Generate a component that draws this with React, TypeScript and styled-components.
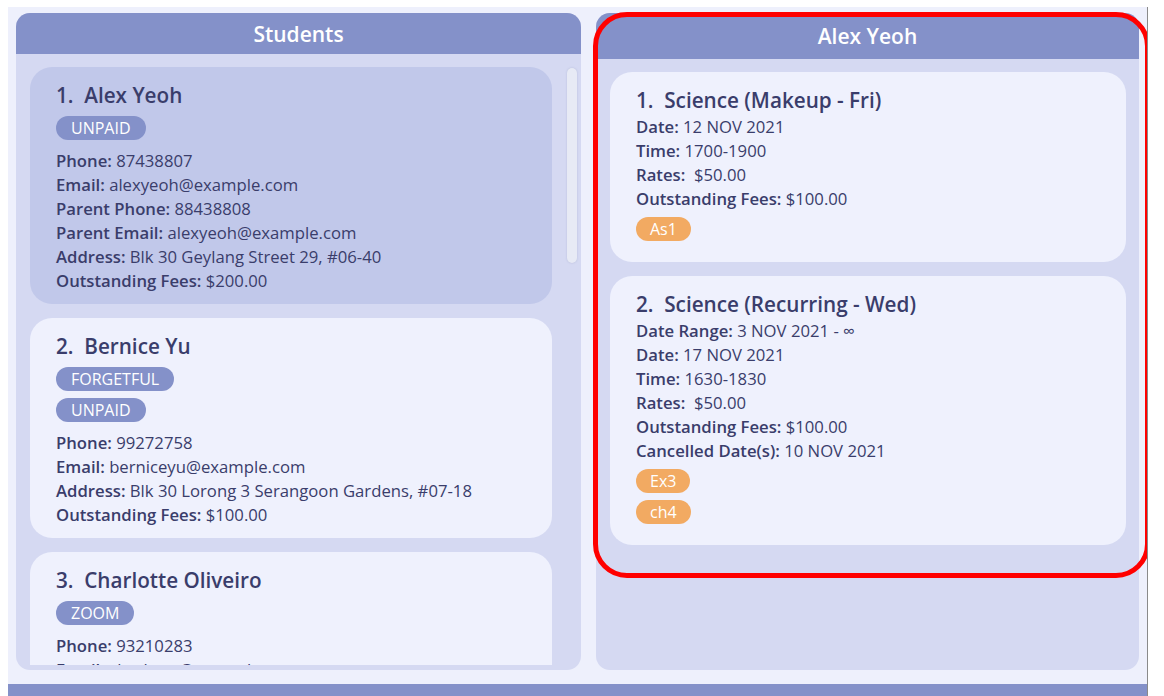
import React from "react";
import styled, { createGlobalStyle } from "styled-components";

const Global = createGlobalStyle`
  html, body { margin: 0; padding: 0; background: #ffffff; }
  body { font-family: "Open Sans", "Noto Sans", sans-serif; overflow: hidden; }
  * { box-sizing: border-box; }
`;

const Window = styled.div`
  position: relative;
  margin: 7px 0 0 8px;
  width: 1140px;
  height: 689px;
  background: #eef0fc;
  border-right: 1px solid #8a8a8a;
  display: flex;
  flex-direction: column;
  overflow: hidden;
`;

const Panels = styled.div`
  display: flex;
  gap: 15px;
  padding: 6px 8px 0 8px;
  height: 663px;
`;

const Panel = styled.section<{ $w: number }>`
  width: ${(p) => p.$w}px;
  height: 657px;
  background: #d5d9f2;
  border-radius: 14px;
  display: flex;
  flex-direction: column;
  overflow: hidden;
`;

const PanelHeader = styled.header<{ $h: number }>`
  height: ${(p) => p.$h}px;
  flex: none;
  background: #8491c9;
  color: #ffffff;
  font-size: 21px;
  font-weight: 600;
  display: flex;
  align-items: center;
  justify-content: center;
`;

const ListViewport = styled.div`
  flex: 1;
  margin-bottom: 5px;
  overflow: hidden;
  display: flex;
  gap: 15px;
  padding: 13px 4px 0 14px;
`;

const CardColumn = styled.div`
  flex: 1;
  display: flex;
  flex-direction: column;
  gap: 14px;
`;

const ScrollTrack = styled.div`
  width: 10px;
  flex: none;
  padding-top: 1px;
`;

const ScrollThumb = styled.div`
  width: 10px;
  height: 195px;
  border-radius: 5px;
  background: #e7eaf5;
  box-shadow: 0 0 2px rgba(120, 130, 170, 0.35);
`;

const DetailBody = styled.div`
  flex: 1;
  display: flex;
  flex-direction: column;
  gap: 14px;
  padding: 13px 13px 0 14px;
`;

const Card = styled.div<{ $selected?: boolean; $pb: number }>`
  background: ${(p) => (p.$selected ? "#c1c8ea" : "#eff1fd")};
  border-radius: 22px;
  padding: 14px 20px ${(p) => p.$pb}px 26px;
  color: #3a3d6b;
  flex: none;
`;

const Title = styled.div`
  height: 28px;
  font-size: 20.7px;
  font-weight: 600;
  line-height: 28px;
  white-space: pre;
  color: #3a3d6b;
`;

const Tags = styled.div<{ $mt: number }>`
  display: flex;
  flex-direction: column;
  align-items: flex-start;
  gap: 7px;
  margin-top: ${(p) => p.$mt}px;
`;

const Tag = styled.span<{ $tone: "purple" | "orange" }>`
  display: inline-flex;
  align-items: center;
  height: 24px;
  padding: 0 ${(p) => (p.$tone === "purple" ? 15 : 14)}px;
  border-radius: 12px;
  background: ${(p) => (p.$tone === "purple" ? "#8491c9" : "#f2aa62")};
  color: #ffffff;
  font-size: 16px;
  line-height: 24px;
`;

const Line = styled.div`
  height: 24px;
  font-size: 16.7px;
  line-height: 24px;
  white-space: pre;
  color: #3a3d6b;
`;

const Label = styled.span`
  font-weight: 600;
`;

const Lines = styled.div<{ $mt: number }>`
  margin-top: ${(p) => p.$mt}px;
`;

const StatusBar = styled.div`
  margin-top: 14px;
  height: 14px;
  background: #8491c9;
  flex: none;
`;

const Highlight = styled.div`
  position: absolute;
  left: 585px;
  top: 5px;
  width: 557px;
  height: 566px;
  border: 5px solid #ff0000;
  border-radius: 34px;
  pointer-events: none;
`;

type Field = [string, string];

type Student = {
  name: string;
  tags: string[];
  fields: Field[];
  selected?: boolean;
};

const students: Student[] = [
  {
    name: "Alex Yeoh",
    tags: ["UNPAID"],
    selected: true,
    fields: [
      ["Phone:", " 87438807"],
      ["Email:", " alexyeoh@example.com"],
      ["Parent Phone:", " 88438808"],
      ["Parent Email:", " alexyeoh@example.com"],
      ["Address:", " Blk 30 Geylang Street 29, #06-40"],
      ["Outstanding Fees:", " $200.00"],
    ],
  },
  {
    name: "Bernice Yu",
    tags: ["FORGETFUL", "UNPAID"],
    fields: [
      ["Phone:", " 99272758"],
      ["Email:", " berniceyu@example.com"],
      ["Address:", " Blk 30 Lorong 3 Serangoon Gardens, #07-18"],
      ["Outstanding Fees:", " $100.00"],
    ],
  },
  {
    name: "Charlotte Oliveiro",
    tags: ["ZOOM"],
    fields: [
      ["Phone:", " 93210283"],
      ["Email:", " charlotte@example.com"],
    ],
  },
];

type Lesson = { title: string; fields: Field[]; tags: string[] };

const lessons: Lesson[] = [
  {
    title: "Science (Makeup - Fri)",
    fields: [
      ["Date:", " 12 NOV 2021"],
      ["Time:", " 1700-1900"],
      ["Rates:", "  $50.00"],
      ["Outstanding Fees:", " $100.00"],
    ],
    tags: ["As1"],
  },
  {
    title: "Science (Recurring - Wed)",
    fields: [
      ["Date Range:", " 3 NOV 2021 - \u221e"],
      ["Date:", " 17 NOV 2021"],
      ["Time:", " 1630-1830"],
      ["Rates:", "  $50.00"],
      ["Outstanding Fees:", " $100.00"],
      ["Cancelled Date(s):", " 10 NOV 2021"],
    ],
    tags: ["Ex3", "ch4"],
  },
];

const FieldLines = ({ fields, mt }: { fields: Field[]; mt: number }) => (
  <Lines $mt={mt}>
    {fields.map(([k, v]) => (
      <Line key={k}>
        <Label>{k}</Label>
        {v}
      </Line>
    ))}
  </Lines>
);

export default function App() {
  return (
    <>
      <Global />
      <Window>
        <Panels>
          <Panel $w={565}>
            <PanelHeader $h={41}>Students</PanelHeader>
            <ListViewport>
              <CardColumn>
                {students.map((s, i) => (
                  <Card key={s.name} $selected={s.selected} $pb={11}>
                    <Title>{`${i + 1}.  ${s.name}`}</Title>
                    <Tags $mt={7}>
                      {s.tags.map((t) => (
                        <Tag key={t} $tone="purple">
                          {t}
                        </Tag>
                      ))}
                    </Tags>
                    <FieldLines fields={s.fields} mt={9} />
                  </Card>
                ))}
              </CardColumn>
              <ScrollTrack>
                <ScrollThumb />
              </ScrollTrack>
            </ListViewport>
          </Panel>
          <Panel $w={543}>
            <PanelHeader $h={46}>Alex Yeoh</PanelHeader>
            <DetailBody>
              {lessons.map((l, i) => (
                <Card key={l.title} $pb={21}>
                  <Title>{`${i + 1}.  ${l.title}`}</Title>
                  <FieldLines fields={l.fields} mt={1} />
                  <Tags $mt={6}>
                    {l.tags.map((t) => (
                      <Tag key={t} $tone="orange">
                        {t}
                      </Tag>
                    ))}
                  </Tags>
                </Card>
              ))}
            </DetailBody>
          </Panel>
        </Panels>
        <StatusBar />
        <Highlight />
      </Window>
    </>
  );
}
